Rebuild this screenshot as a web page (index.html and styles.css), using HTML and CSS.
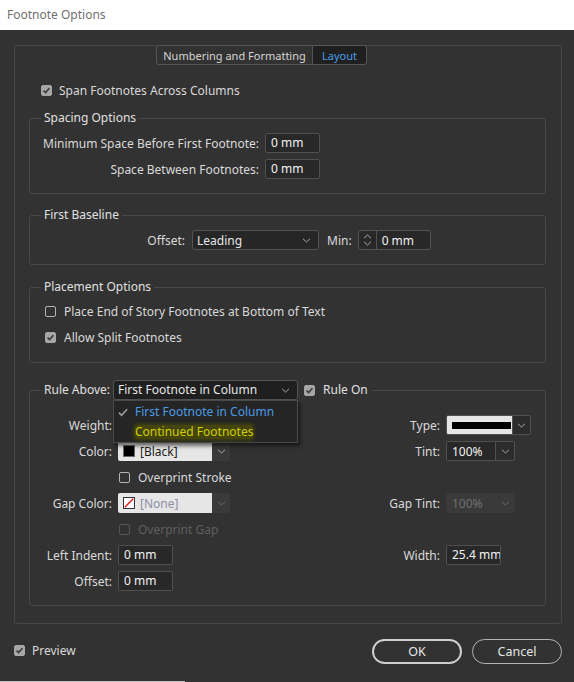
FILE: index.html
```html
<!DOCTYPE html>
<html lang="en">
<head>
    <meta charset="UTF-8">
    <title>Footnote Options</title>
    <link rel="stylesheet" href="styles.css">
</head>
<body>
    <div class="titlebar">Footnote Options</div>
    <div class="dialog">
        <div class="panel">
            <div class="tabs">
                <span class="tab">Numbering and Formatting</span>
                <span class="tab active">Layout</span>
            </div>

            <label class="check span-check">
                <span class="box on"><svg viewBox="0 0 11 11"><path d="M2.6 5.6l2 2 3.8-4.4"/></svg></span>
                Span Footnotes Across Columns
            </label>

            <fieldset class="group spacing">
                <legend>Spacing Options</legend>
                <div class="spacing-grid">
                    <span class="lbl">Minimum Space Before First Footnote:</span>
                    <span class="field">0 mm</span>
                    <span class="lbl">Space Between Footnotes:</span>
                    <span class="field">0 mm</span>
                </div>
            </fieldset>

            <fieldset class="group baseline">
                <legend>First Baseline</legend>
                <div class="baseline-row">
                    <span class="offset-lbl">Offset:</span>
                    <div class="select leading">
                        <span>Leading</span>
                        <svg class="chev" viewBox="0 0 9 5"><path d="M1 .8l3.5 3.2L8 .8"/></svg>
                    </div>
                    <span class="min-lbl">Min:</span>
                    <div class="spinner">
                        <span class="spin-arrows">
                            <svg viewBox="0 0 9 5"><path d="M1 4.2L4.5 1 8 4.2"/></svg>
                            <svg viewBox="0 0 9 5"><path d="M1 .8l3.5 3.2L8 .8"/></svg>
                        </span>
                        <span class="spin-val">0 mm</span>
                    </div>
                </div>
            </fieldset>

            <fieldset class="group placement">
                <legend>Placement Options</legend>
                <div class="placement-list">
                    <label class="check">
                        <span class="box"></span>
                        Place End of Story Footnotes at Bottom of Text
                    </label>
                    <label class="check">
                        <span class="box on"><svg viewBox="0 0 11 11"><path d="M2.6 5.6l2 2 3.8-4.4"/></svg></span>
                        Allow Split Footnotes
                    </label>
                </div>
            </fieldset>

            <fieldset class="group rule">
                <legend>
                    <span class="rule-lbl">Rule Above:</span>
                    <div class="select rule-select">
                        <span>First Footnote in Column</span>
                        <svg class="chev" viewBox="0 0 9 5"><path d="M1 .8l3.5 3.2L8 .8"/></svg>
                        <div class="menu">
                            <div class="item selected">
                                <svg class="tick" viewBox="0 0 11 9"><path d="M1 4.6l3 3L10 1"/></svg>
                                First Footnote in Column
                            </div>
                            <div class="item hot">
                                <span class="tick"></span>
                                <span class="hl">Continued Footnotes</span>
                            </div>
                        </div>
                    </div>
                    <label class="check rule-on">
                        <span class="box on"><svg viewBox="0 0 11 11"><path d="M2.6 5.6l2 2 3.8-4.4"/></svg></span>
                        Rule On
                    </label>
                </legend>

                <div class="rule-grid">
                    <span class="lbl">Weight:</span>
                    <span></span>
                    <span class="lbl">Type:</span>
                    <div class="combo type-combo">
                        <span class="combo-main light"><span class="stroke-line"></span></span>
                        <span class="combo-arrow"><svg class="chev" viewBox="0 0 9 5"><path d="M1 .8l3.5 3.2L8 .8"/></svg></span>
                    </div>

                    <span class="lbl">Color:</span>
                    <div class="combo color-combo">
                        <span class="combo-main light"><span class="chip black"></span>[Black]</span>
                        <span class="combo-arrow shaded"><svg class="chev" viewBox="0 0 9 5"><path d="M1 .8l3.5 3.2L8 .8"/></svg></span>
                    </div>
                    <span class="lbl">Tint:</span>
                    <div class="combo tint-combo">
                        <span class="combo-main">100%</span>
                        <span class="combo-arrow"><svg class="chev" viewBox="0 0 9 5"><path d="M1 .8l3.5 3.2L8 .8"/></svg></span>
                    </div>

                    <span></span>
                    <label class="check"><span class="box"></span>Overprint Stroke</label>
                    <span></span>
                    <span></span>

                    <span class="lbl">Gap Color:</span>
                    <div class="combo color-combo off">
                        <span class="combo-main light"><span class="chip none"><svg viewBox="0 0 12 12"><path d="M1 11L11 1"/></svg></span>[None]</span>
                        <span class="combo-arrow shaded"><svg class="chev" viewBox="0 0 9 5"><path d="M1 .8l3.5 3.2L8 .8"/></svg></span>
                    </div>
                    <span class="lbl">Gap Tint:</span>
                    <div class="combo tint-combo off">
                        <span class="combo-main">100%</span>
                        <span class="combo-arrow"><svg class="chev" viewBox="0 0 9 5"><path d="M1 .8l3.5 3.2L8 .8"/></svg></span>
                    </div>

                    <span></span>
                    <label class="check disabled"><span class="box"></span>Overprint Gap</label>
                    <span></span>
                    <span></span>

                    <span class="lbl">Left Indent:</span>
                    <span class="field">0 mm</span>
                    <span class="lbl">Width:</span>
                    <span class="field">25.4 mm</span>

                    <span class="lbl">Offset:</span>
                    <span class="field">0 mm</span>
                    <span></span>
                    <span></span>
                </div>
            </fieldset>
        </div>

        <div class="footer">
            <label class="check preview">
                <span class="box on"><svg viewBox="0 0 11 11"><path d="M2.6 5.6l2 2 3.8-4.4"/></svg></span>
                Preview
            </label>
            <div class="buttons">
                <button class="btn default">OK</button>
                <button class="btn">Cancel</button>
            </div>
        </div>
    </div>
    <div class="strip"></div>
</body>
</html>
```

FILE: styles.css
```css
html, body{
    margin: 0;
    height: 682px;
    overflow: hidden;
}
body{
    background-color: #323232;
    font-family: "Noto Sans", "Open Sans", sans-serif;
    font-size: 12px;
    color: #d9d9d9;
}
.titlebar{
    height: 30px;
    line-height: 30px;
    padding-left: 7px;
    background-color: #fff;
    color: #707070;
}
.dialog{
    height: 651px;
    box-sizing: border-box;
    padding: 15px 12px 0 14px;
}
.panel{
    border: 1px solid #464646;
    border-radius: 3px;
    padding: 0 15px 17px 14px;
}

/* tabs */
.tabs{
    display: flex;
    margin: -1px 0 0 127px;
}
.tab{
    height: 20px;
    line-height: 19px;
    box-sizing: border-box;
    border: 1px solid #555;
    text-align: center;
    white-space: nowrap;
    font-size: 11px;
    color: #d6d6d6;
}
.tab:first-child{
    width: 157px;
    border-radius: 3px 0 0 3px;
}
.tab.active{
    width: 54px;
    border-left: none;
    border-radius: 0 3px 3px 0;
    background-color: #1f1f1f;
    color: #4b9be6;
}

/* checkboxes */
.check{
    display: flex;
    align-items: center;
    gap: 8px;
    height: 16px;
    white-space: nowrap;
}
.box{
    width: 11px;
    height: 11px;
    box-sizing: border-box;
    border: 1px solid #b4b4b4;
    border-radius: 2px;
    flex: none;
}
.box.on{
    background-color: #a6a6a6;
    border-color: #a6a6a6;
}
.box svg{
    display: block;
    width: 11px;
    height: 11px;
    margin: -1px;
}
.box svg path{
    fill: none;
    stroke: #3a3a3a;
    stroke-width: 1.6;
}
.check.disabled{
    color: #5f5f5f;
}
.check.disabled .box{
    border-color: #555;
}
.span-check{
    margin: 17px 0 0 12px;
    gap: 7px;
}

/* groups */
.group{
    margin: 0;
    border: 1px solid #484848;
    border-radius: 3px;
    min-width: 0;
}
.group legend{
    margin-left: 11px;
    padding: 0 3px;
    line-height: 16px;
    color: #e0e0e0;
}
.spacing{
    margin-top: 12px;
    padding: 7px 0 14px 0;
}
.baseline{
    margin-top: 13px;
    padding: 7px 0 14px 0;
}
.placement{
    margin-top: 14px;
    padding: 8px 0 17px 0;
}
.placement-list{
    padding-left: 15px;
}
.placement-list .check + .check{
    margin-top: 10px;
}
.rule{
    margin-top: 17px;
    padding: 12px 0 11px 0;
}

.lbl{
    text-align: right;
    white-space: nowrap;
}
.field{
    height: 20px;
    box-sizing: border-box;
    border: 1px solid #505050;
    border-radius: 2px;
    background-color: #282828;
    color: #f2f2f2;
    padding: 0 5px;
    line-height: 18px;
    white-space: nowrap;
    overflow: hidden;
}

.spacing-grid{
    display: grid;
    grid-template-columns: 229px 55px;
    column-gap: 6px;
    row-gap: 6px;
    align-items: center;
}

/* selects */
.chev{
    width: 9px;
    height: 5px;
    display: block;
}
.chev path, .spin-arrows path, .tick path{
    fill: none;
    stroke: #a8a8a8;
    stroke-width: 1;
}
.select{
    position: relative;
    height: 20px;
    box-sizing: border-box;
    border: 1px solid #535353;
    border-radius: 3px;
    background-color: #262626;
    color: #e6e6e6;
    display: flex;
    align-items: center;
    justify-content: space-between;
    padding: 0 7px 0 5px;
}
.baseline-row{
    display: flex;
    align-items: center;
}
.offset-lbl{
    width: 155px;
    text-align: right;
    margin-right: 7px;
}
.leading{
    width: 127px;
    padding-left: 4px;
}
.min-lbl{
    margin: 0 6px 0 8px;
}
.spinner{
    width: 73px;
    height: 20px;
    box-sizing: border-box;
    border: 1px solid #535353;
    border-radius: 3px;
    background-color: #282828;
    display: flex;
    align-items: center;
}
.spin-arrows{
    width: 17px;
    height: 18px;
    border-right: 1px solid #535353;
    display: flex;
    flex-direction: column;
    align-items: center;
    justify-content: center;
    gap: 2px;
}
.spin-arrows svg{
    width: 9px;
    height: 5px;
    display: block;
}
.spin-val{
    padding-left: 5px;
    color: #f2f2f2;
}

/* rule above */
.rule legend{
    display: flex;
    align-items: center;
    padding: 0 4px 0 3px;
}
.rule-lbl{
    margin-right: 3px;
}
.rule-select{
    width: 185px;
    background-color: #1f1f1f;
    padding-left: 4px;
}
.rule-on{
    margin-left: 6px;
}
.menu{
    position: absolute;
    left: -1px;
    top: 19px;
    width: 185px;
    box-sizing: border-box;
    background-color: #252525;
    border: 1px solid #4a4a4a;
    box-shadow: 2px 3px 4px rgba(0, 0, 0, .55);
    padding: 1px 0 0;
    z-index: 2;
}
.item{
    height: 20px;
    display: flex;
    align-items: center;
    padding-left: 4px;
    gap: 7px;
}
.tick{
    width: 10px;
    height: 9px;
    display: block;
    flex: none;
}
.tick path{
    stroke: #9a9a9a;
    stroke-width: 1.8;
}
.item.selected{
    color: #4b9be6;
}
.item.hot{
    color: #cfcf00;
}
.hl{
    background-color: #44440e;
    box-shadow: 0 0 3px 2px #3c3c10;
    border-radius: 3px;
    line-height: 14px;
}

.rule-grid{
    display: grid;
    grid-template-columns: 82px 1fr 80px 99px;
    column-gap: 6px;
    grid-auto-rows: 26px;
    align-items: center;
}
.rule-grid .check{
    padding-left: 1px;
}
.rule-grid .field{
    width: 55px;
}
.combo{
    display: flex;
    height: 20px;
    box-sizing: border-box;
    border: 1px solid #505050;
    border-radius: 2px;
    overflow: hidden;
}
.combo-main{
    flex: 1;
    display: flex;
    align-items: center;
    padding-left: 5px;
    background-color: #282828;
    color: #f2f2f2;
}
.combo-main.light{
    background-color: #e6e6e6;
    color: #1c1c1c;
    gap: 5px;
}
.combo-arrow{
    width: 17px;
    border-left: 1px solid #505050;
    display: flex;
    align-items: center;
    justify-content: center;
    background-color: #2c2c2c;
}
.combo-arrow.shaded{
    background-color: #3a3a3a;
    border-left: none;
}
.type-combo{
    width: 85px;
}
.stroke-line{
    width: 59px;
    height: 7px;
    background-color: #000;
}
.color-combo{
    width: 112px;
    border: none;
}
.color-combo .combo-arrow{
    width: 18px;
}
.tint-combo{
    width: 69px;
}
.tint-combo .combo-arrow{
    width: 18px;
}
.chip{
    width: 12px;
    height: 12px;
    box-sizing: border-box;
    border: 1px solid #6a6a6a;
}
.chip.black{
    background-color: #000;
}
.chip.none{
    background-color: #fff;
    border-color: #333;
}
.chip.none svg{
    display: block;
    width: 10px;
    height: 10px;
}
.chip.none path{
    stroke: #e01010;
    stroke-width: 1.6;
}
.color-combo.off .combo-main{
    color: #8e8ea8;
}
.color-combo.off .chev path{
    stroke: #6a6a6a;
}
.tint-combo.off{
    border-color: #3a3a3a;
}
.tint-combo.off .combo-main, .tint-combo.off .combo-arrow{
    background-color: #3a3a3a;
    border-left: none;
    color: #707070;
}
.tint-combo.off .chev path{
    stroke: #6a6a6a;
}

/* footer */
.footer{
    display: flex;
    justify-content: space-between;
    align-items: flex-start;
    margin-top: 15px;
}
.preview{
    margin-top: 3px;
    gap: 7px;
}
.buttons{
    display: flex;
    gap: 10px;
}
.btn{
    width: 90px;
    height: 25px;
    border-radius: 13px;
    background: transparent;
    border: 1px solid #b4b4b4;
    color: #e6e6e6;
    font: inherit;
    font-size: 12.5px;
    padding: 0;
}
.btn.default{
    border: 2px solid #cfcfcf;
}
.strip{
    width: 185px;
    height: 1px;
    background-color: #c4c4c4;
}
```
